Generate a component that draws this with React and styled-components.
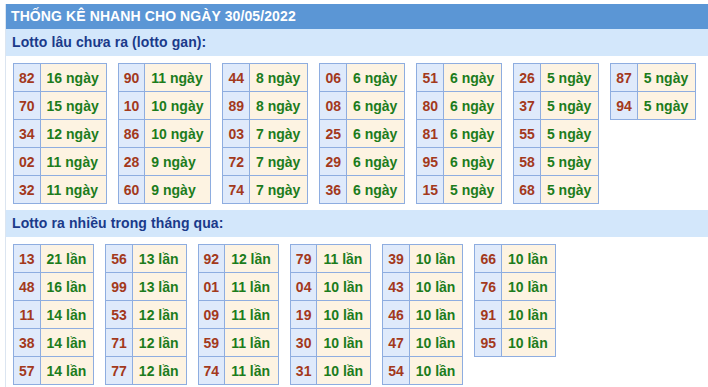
import React from "react";
import styled, { createGlobalStyle } from "styled-components";

const GlobalStyle = createGlobalStyle`
  body {
    margin: 0;
    background: #fff;
    font-family: "Liberation Sans", Arial, sans-serif;
  }
`;

const ganData = [
  [["82", 16], ["70", 15], ["34", 12], ["02", 11], ["32", 11]],
  [["90", 11], ["10", 10], ["86", 10], ["28", 9], ["60", 9]],
  [["44", 8], ["89", 8], ["03", 7], ["72", 7], ["74", 7]],
  [["06", 6], ["08", 6], ["25", 6], ["29", 6], ["36", 6]],
  [["51", 6], ["80", 6], ["81", 6], ["95", 6], ["15", 5]],
  [["26", 5], ["37", 5], ["55", 5], ["58", 5], ["68", 5]],
  [["87", 5], ["94", 5]],
];

const nhieuData = [
  [["13", 21], ["48", 16], ["11", 14], ["38", 14], ["57", 14]],
  [["56", 13], ["99", 13], ["53", 12], ["71", 12], ["77", 12]],
  [["92", 12], ["01", 11], ["09", 11], ["59", 11], ["74", 11]],
  [["79", 11], ["04", 10], ["19", 10], ["30", 10], ["31", 10]],
  [["39", 10], ["43", 10], ["46", 10], ["47", 10], ["54", 10]],
  [["66", 10], ["76", 10], ["91", 10], ["95", 10]],
];

const StatTable = ({ rows, unit }) => (
  <Table>
    <tbody>
      {rows.map(([num, count]) => (
        <tr key={num}>
          <NumCell>{num}</NumCell>
          <ValueCell>
            {count} {unit}
          </ValueCell>
        </tr>
      ))}
    </tbody>
  </Table>
);

const App = () => {
  return (
    <Wrapper>
      <GlobalStyle />
      <Box>
        <Header>THỐNG KÊ NHANH CHO NGÀY 30/05/2022</Header>
        <SectionTitle>Lotto lâu chưa ra (lotto gan):</SectionTitle>
        <TableRow>
          {ganData.map((rows, i) => (
            <StatTable key={i} rows={rows} unit="ngày" />
          ))}
        </TableRow>
        <SectionTitle>Lotto ra nhiều trong tháng qua:</SectionTitle>
        <TableRow>
          {nhieuData.map((rows, i) => (
            <StatTable key={i} rows={rows} unit="lần" />
          ))}
        </TableRow>
      </Box>
    </Wrapper>
  );
};

export default App;

const Wrapper = styled.div`
  padding: 4px 0 0 5px;
  overflow: hidden;
`;

const Box = styled.div`
  border-left: 1px solid #dbe5f1;
  width: 720px;
`;

const Header = styled.div`
  background: #5b96d5;
  color: #fff;
  font-size: 14px;
  font-weight: bold;
  height: 25px;
  line-height: 25px;
  padding-left: 5px;
  letter-spacing: 0.1px;
`;

const SectionTitle = styled.div`
  background: #d3e7fb;
  color: #1a3a8a;
  font-size: 14px;
  font-weight: bold;
  height: 27px;
  line-height: 27px;
  padding-left: 6px;
  letter-spacing: 0.1px;
`;

const TableRow = styled.div`
  display: flex;
  flex-wrap: wrap;
  align-items: flex-start;
  gap: 11px;
  padding: 7px 0 6px 7px;
`;

const Table = styled.table`
  border-collapse: collapse;
  border: 1px solid #8eade0;
  font-size: 14px;
  font-weight: bold;
`;

const NumCell = styled.td`
  background: #dfeafb;
  color: #a3391c;
  border: 1px solid #8eade0;
  height: 27px;
  padding: 0 5px;
  text-align: center;
`;

const ValueCell = styled.td`
  background: #fdf3e2;
  color: #1c7c1c;
  border: 1px solid #8eade0;
  height: 27px;
  padding: 0 7px 0 6px;
  white-space: nowrap;
`;
